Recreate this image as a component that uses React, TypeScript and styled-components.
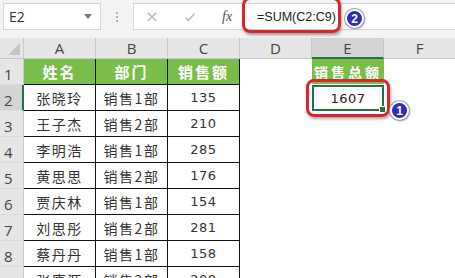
import styled, { createGlobalStyle, css } from 'styled-components';

const GlobalStyle = createGlobalStyle`
  html, body {
    margin: 0;
    padding: 0;
    background: #ffffff;
    overflow: hidden;
  }
`;

type Row = { name: string; dept: string; amount: number };

const rows: Row[] = [
  { name: '张晓玲', dept: '销售1部', amount: 135 },
  { name: '王子杰', dept: '销售2部', amount: 210 },
  { name: '李明浩', dept: '销售1部', amount: 285 },
  { name: '黄思思', dept: '销售2部', amount: 176 },
  { name: '贾庆林', dept: '销售1部', amount: 154 },
  { name: '刘思彤', dept: '销售2部', amount: 281 },
  { name: '蔡丹丹', dept: '销售1部', amount: 158 },
  { name: '张康源', dept: '销售2部', amount: 208 },
];

const columns = ['A', 'B', 'C', 'D', 'E', 'F'];

export default function App() {
  const total = rows.reduce((s, r) => s + r.amount, 0);
  return (
    <Window>
      <GlobalStyle />
      <FormulaBar>
        <NameBox>
          <span>E2</span>
          <Caret />
        </NameBox>
        <Grip>
          <i />
          <i />
          <i />
        </Grip>
        <FormulaBox>
          <ToolIcon viewBox="0 0 12 12">
            <path d="M2 2 L10 10 M10 2 L2 10" stroke="#b5b5b5" strokeWidth="1.3" fill="none" />
          </ToolIcon>
          <ToolIcon viewBox="0 0 12 12">
            <path d="M1.5 6.5 L4.5 9.5 L10.5 2.5" stroke="#b5b5b5" strokeWidth="1.3" fill="none" />
          </ToolIcon>
          <Fx>fx</Fx>
          <FormulaText>=SUM(C2:C9)</FormulaText>
        </FormulaBox>
      </FormulaBar>

      <Sheet>
        <Corner>
          <svg width="12" height="12" viewBox="0 0 12 12">
            <path d="M12 0 L12 12 L0 12 Z" fill="#c4c4c4" />
          </svg>
        </Corner>
        {columns.map((c) => (
          <ColHeader key={c} $active={c === 'E'}>
            {c}
          </ColHeader>
        ))}

        <RowHeader>1</RowHeader>
        <Cell $kind="head">姓名</Cell>
        <Cell $kind="head">部门</Cell>
        <Cell $kind="head">销售额</Cell>
        <Cell $kind="blank" />
        <Cell $kind="sumHead">销售总额</Cell>
        <Cell $kind="blank" />

        {rows.map((r, i) => (
          <RowGroup key={r.name} row={r} index={i + 2} total={i === 0 ? total : undefined} />
        ))}
      </Sheet>

      <Callout style={{ left: 242, top: -3, width: 99, height: 36 }} />
      <Badge style={{ left: 345, top: 9 }}>2</Badge>
      <Callout style={{ left: 306, top: 79, width: 84, height: 38 }} />
      <Badge style={{ left: 390, top: 101 }}>1</Badge>
    </Window>
  );
}

function RowGroup({ row, index, total }: { row: Row; index: number; total?: number }) {
  return (
    <>
      <RowHeader $active={index === 2}>{index}</RowHeader>
      <Cell $kind="body">{row.name}</Cell>
      <Cell $kind="body">{row.dept}</Cell>
      <Cell $kind="number">{row.amount}</Cell>
      <Cell $kind="blank" />
      {total !== undefined ? (
        <Selected>
          {total}
          <Handle />
        </Selected>
      ) : (
        <Cell $kind="blank" />
      )}
      <Cell $kind="blank" />
    </>
  );
}

const Window = styled.div`
  position: relative;
  width: 455px;
  height: 278px;
  overflow: hidden;
  background: #ffffff;
`;

// formula bar
const FormulaBar = styled.div`
  display: flex;
  align-items: flex-start;
  height: 38px;
  padding: 3px 0 0 3px;
  box-sizing: border-box;
  background: #f3f3f3;
`;

const NameBox = styled.div`
  display: flex;
  align-items: center;
  justify-content: space-between;
  width: 98px;
  height: 27px;
  padding: 0 8px 0 5px;
  box-sizing: border-box;
  background: #ffffff;
  border: 1px solid #d4d4d4;
  font-family: 'Open Sans', 'Liberation Sans', sans-serif;
  font-size: 14px;
  color: #333333;
`;

const Caret = styled.span`
  width: 0;
  height: 0;
  border-left: 4px solid transparent;
  border-right: 4px solid transparent;
  border-top: 5px solid #777777;
`;

const Grip = styled.div`
  display: flex;
  flex-direction: column;
  align-items: center;
  justify-content: center;
  gap: 2px;
  width: 32px;
  height: 27px;

  i {
    width: 2px;
    height: 2px;
    background: #b0b0b0;
  }
`;

const FormulaBox = styled.div`
  display: flex;
  align-items: center;
  flex: 1;
  height: 27px;
  background: #ffffff;
  border: 1px solid #d4d4d4;
  border-right: none;
  box-sizing: border-box;
  padding-left: 12px;
`;

const ToolIcon = styled.svg`
  width: 12px;
  height: 12px;
  margin-right: 26px;
`;

const Fx = styled.span`
  font-family: 'Liberation Serif', serif;
  font-style: italic;
  font-size: 14px;
  color: #555555;
  width: 24px;
`;

const FormulaText = styled.span`
  margin-left: 11px;
  font-family: 'Liberation Sans', sans-serif;
  font-size: 12.5px;
  color: #222222;
`;

// sheet grid
const Sheet = styled.div`
  display: grid;
  grid-template-columns: 24px repeat(6, 72px);
  grid-template-rows: 21px repeat(9, 26px);
`;

const headerBase = css`
  background: #e6e6e6;
  color: #444444;
  font-family: 'Open Sans', 'Liberation Sans', sans-serif;
  font-size: 15px;
  box-sizing: border-box;
  display: flex;
  align-items: center;
`;

const Corner = styled.div`
  ${headerBase};
  justify-content: flex-end;
  align-items: flex-end;
  padding: 0 3px 3px 0;
  border-right: 1px solid #c8c8c8;
  border-bottom: 1px solid #c8c8c8;
`;

const ColHeader = styled.div<{ $active?: boolean }>`
  ${headerBase};
  justify-content: center;
  border-right: 1px solid #c8c8c8;
  border-bottom: 1px solid #c8c8c8;
  ${(p) =>
    p.$active &&
    css`
      background: #d4d4d4;
      border-bottom: 2px solid #217346;
    `}
`;

const RowHeader = styled.div<{ $active?: boolean }>`
  ${headerBase};
  padding-left: 4px;
  padding-top: 4px;
  border-right: 1px solid #c8c8c8;
  border-bottom: 1px solid #dadada;
  ${(p) =>
    p.$active &&
    css`
      background: #d4d4d4;
      border-right: 2px solid #217346;
    `}
`;

type CellKind = 'head' | 'body' | 'number' | 'blank' | 'sumHead';

const Cell = styled.div<{ $kind: CellKind }>`
  display: flex;
  align-items: center;
  justify-content: center;
  box-sizing: border-box;
  font-family: 'Noto Sans CJK SC', sans-serif;
  font-size: 14px;
  color: #333333;
  letter-spacing: 1.5px;
  border-right: 1px solid #111111;
  border-bottom: 1px solid #111111;

  ${(p) =>
    p.$kind === 'head' &&
    css`
      background: #7abd4a;
      color: #ffffff;
      font-weight: 700;
      font-size: 15px;
      letter-spacing: 2px;
    `}
  ${(p) =>
    p.$kind === 'number' &&
    css`
      font-family: 'DejaVu Sans', sans-serif;
      font-size: 13px;
      letter-spacing: 0.5px;
    `}
  ${(p) =>
    p.$kind === 'blank' &&
    css`
      border: none;
    `}
  ${(p) =>
    p.$kind === 'sumHead' &&
    css`
      border: none;
      background: #7abd4a;
      color: #ffffff;
      font-weight: 700;
      font-size: 14px;
      letter-spacing: 3px;
      border-bottom: 1px solid #ffffff;
    `}
`;

const Selected = styled.div`
  position: relative;
  display: flex;
  align-items: center;
  justify-content: center;
  box-sizing: border-box;
  border: 2px solid #217346;
  font-family: 'DejaVu Sans', sans-serif;
  font-size: 13px;
  color: #222222;
  letter-spacing: 0.5px;
`;

const Handle = styled.span`
  position: absolute;
  right: -4px;
  bottom: -4px;
  width: 5px;
  height: 5px;
  background: #217346;
  border: 1px solid #ffffff;
`;

// annotations laid over the sheet
const Callout = styled.div`
  position: absolute;
  box-sizing: border-box;
  border: 3px solid #d8262a;
  border-radius: 8px;
  box-shadow: 1px 2px 3px rgba(0, 0, 0, 0.35);
`;

const Badge = styled.div`
  position: absolute;
  width: 19px;
  height: 19px;
  box-sizing: border-box;
  border-radius: 50%;
  background: #2c2cc0;
  border: 2px solid #ffffff;
  box-shadow: 0 0 0 1px #9a9ab8, 1px 1px 2px rgba(0, 0, 0, 0.4);
  color: #ffffff;
  font-family: 'Liberation Sans', sans-serif;
  font-weight: 700;
  font-size: 12px;
  display: flex;
  align-items: center;
  justify-content: center;
`;
